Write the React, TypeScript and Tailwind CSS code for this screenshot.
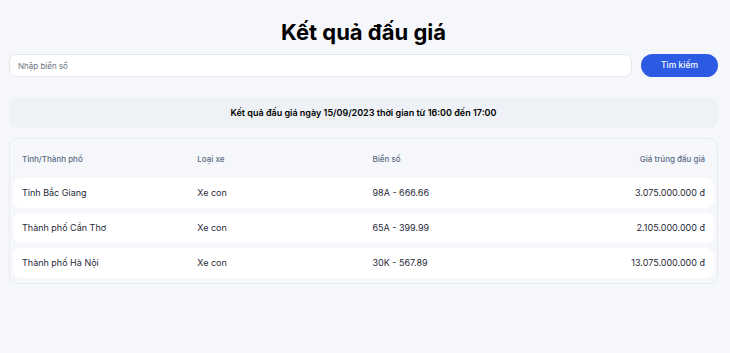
import { useState } from 'react';

interface AuctionRow {
  province: string;
  type: string;
  plate: string;
  price: string;
}

const ROWS: AuctionRow[] = [
  { province: 'Tỉnh Bắc Giang', type: 'Xe con', plate: '98A - 666.66', price: '3.075.000.000 đ' },
  { province: 'Thành phố Cần Thơ', type: 'Xe con', plate: '65A - 399.99', price: '2.105.000.000 đ' },
  { province: 'Thành phố Hà Nội', type: 'Xe con', plate: '30K - 567.89', price: '13.075.000.000 đ' },
];

export default function App() {
  const [query, setQuery] = useState('');

  return (
    <div className="min-h-screen bg-[#f5f7fb] pl-[9px] pr-[12px] pt-[16px] font-['Inter','Noto_Sans',sans-serif] text-[#111827]">
      <h1 className="text-center text-[22px] leading-[32px] font-bold text-black">Kết quả đấu giá</h1>

      {/* Search */}
      <div className="mt-[6px] flex gap-[9px]">
        <input
          value={query}
          onChange={e => setQuery(e.target.value)}
          placeholder="Nhập biển số"
          className="h-[23px] flex-1 rounded-[7px] border border-[#e3e7ee] bg-white px-[8px] text-[8px] outline-none placeholder:text-[#6b7280]"
        />
        <button className="h-[23px] w-[77px] rounded-full bg-[#2c5ae2] text-[8.5px] font-medium text-white">
          Tìm kiếm
        </button>
      </div>

      {/* Session info */}
      <div className="mt-[21px] flex h-[30px] items-center justify-center rounded-[8px] bg-[#eef1f6] text-[9px] font-semibold text-black">
        Kết quả đấu giá ngày 15/09/2023 thời gian từ 16:00 đến 17:00
      </div>

      {/* Results */}
      <div className="mt-[10px] rounded-[8px] border border-[#e8ebf0] bg-[#f5f7fb] px-[3px] pb-[5px]">
        <div className="grid h-[39px] grid-cols-4 items-center text-[8px] font-medium text-[#5b6b82]">
          <div className="px-[9px]">Tỉnh/Thành phố</div>
          <div className="px-[9px]">Loại xe</div>
          <div className="px-[9px]">Biển số</div>
          <div className="px-[9px] text-right">Giá trúng đấu giá</div>
        </div>
        <div className="flex flex-col gap-[5px]">
          {ROWS.map(r => (
            <div key={r.plate} className="grid h-[30px] grid-cols-4 items-center rounded-[8px] bg-white text-[9px] text-[#1f2937]">
              <div className="px-[9px]">{r.province}</div>
              <div className="px-[9px]">{r.type}</div>
              <div className="px-[9px]">{r.plate}</div>
              <div className="px-[9px] text-right">{r.price}</div>
            </div>
          ))}
        </div>
      </div>
    </div>
  );
}
